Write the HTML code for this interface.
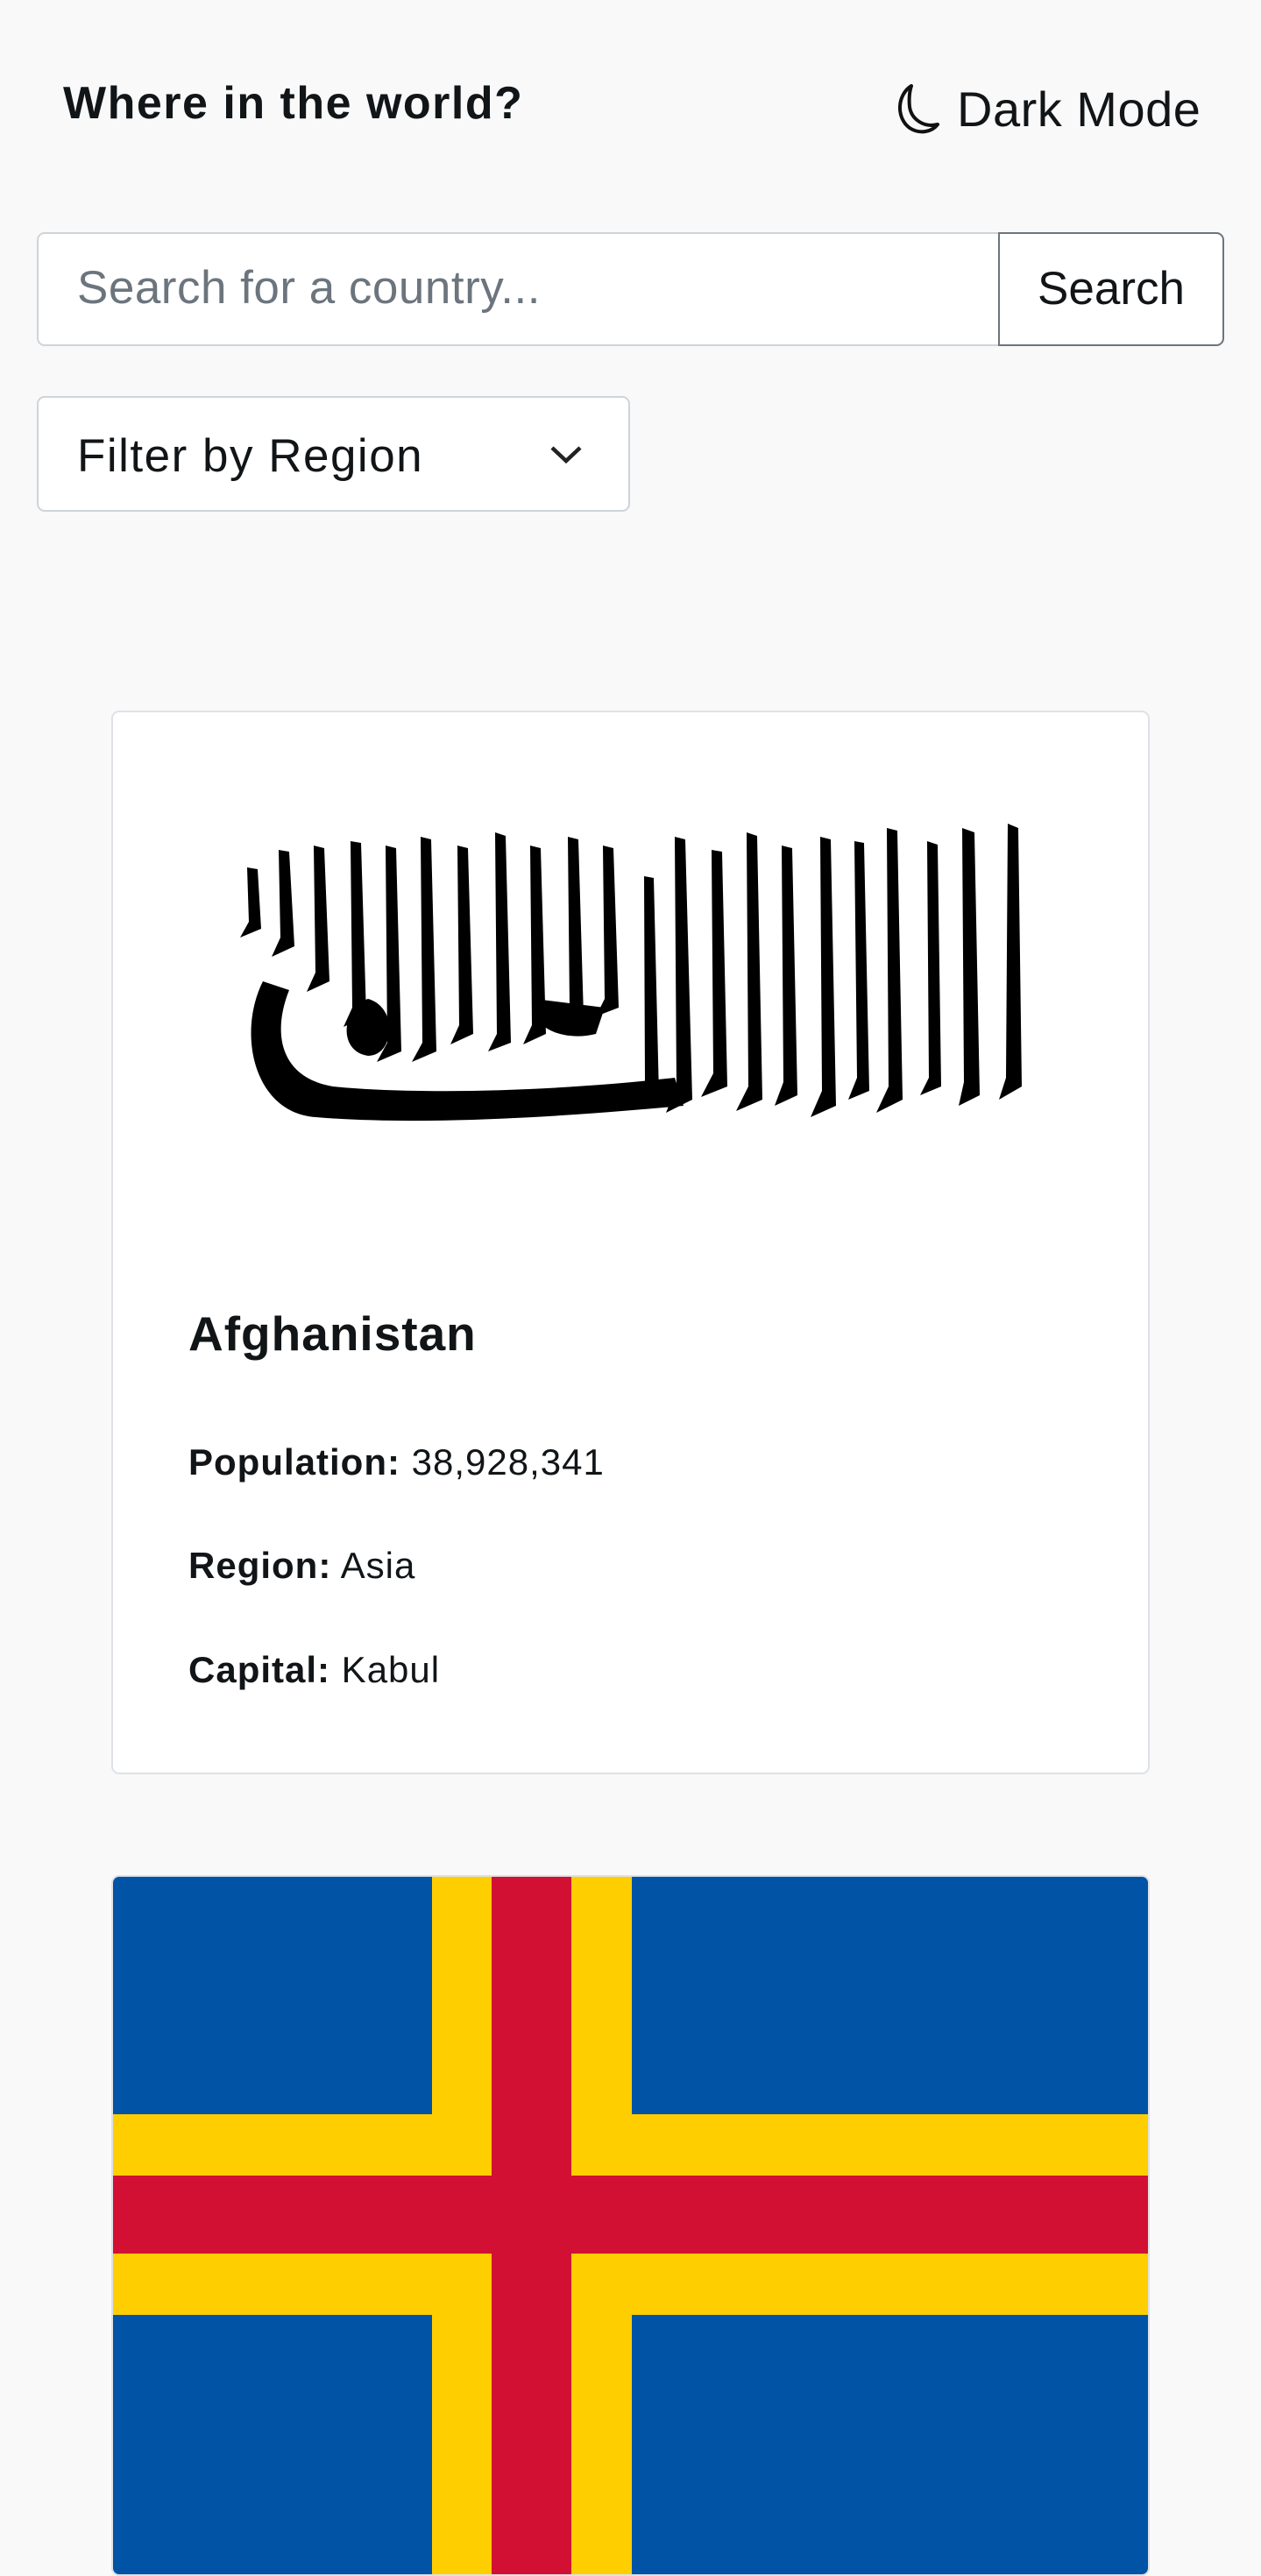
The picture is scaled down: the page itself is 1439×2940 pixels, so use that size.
<!DOCTYPE html>
<html><head><meta charset="utf-8"><style>
*{box-sizing:border-box;margin:0;padding:0}
body{width:1439px;height:2881px;overflow:hidden;background:#f9f9f9;font-family:"Liberation Sans",sans-serif;color:#111517;position:relative}
.abs{position:absolute}
.title{left:72px;top:88px;font-size:52px;font-weight:bold;letter-spacing:1.5px}
.dm{left:1092px;top:92px;font-size:56px;letter-spacing:0.5px}
.search{left:42px;top:265px;width:1355px;height:130px;background:#fff;border:2px solid #ced4da;border-radius:9px}
.ph{left:88px;top:298px;font-size:53px;color:#6c757d;letter-spacing:0.5px}
.btn{left:1139px;top:265px;width:258px;height:130px;border:2px solid #6c757d;border-radius:0 9px 9px 0;background:#fff;font-size:53px;text-align:center;line-height:126px}
.filter{left:42px;top:452px;width:677px;height:132px;background:#fff;border:2px solid #ced4da;border-radius:9px}
.ft{left:88px;top:490px;font-size:53px;letter-spacing:1.5px}
.card{left:127px;width:1185px;background:#fff;border:2px solid #dee2e6;border-radius:9px;overflow:hidden}
.name{left:215px;top:1490px;font-size:55px;font-weight:bold;letter-spacing:1px}
.row{left:215px;font-size:42px;letter-spacing:1px}
.row b{font-weight:bold}
</style></head><body>
<div class="abs title">Where in the world?</div>
<svg class="abs" style="left:1018px;top:94px" width="56" height="62" viewBox="0 0 56 62"><path d="M22 4 C6 14 4 40 20 52 C32 60 46 56 52 48 C36 52 22 42 20 28 C19 18 20 10 22 4 Z" fill="none" stroke="#111" stroke-width="4" stroke-linejoin="round"/></svg>
<div class="abs dm">Dark Mode</div>
<div class="abs search"></div>
<div class="abs ph">Search for a country...</div>
<div class="abs btn">Search</div>
<div class="abs filter"></div>
<div class="abs ft">Filter by Region</div>
<svg class="abs" style="left:626px;top:506px" width="40" height="26" viewBox="0 0 40 26"><path d="M4 5 L20 20 L36 5" fill="none" stroke="#222" stroke-width="4.5"/></svg>

<div class="abs card" style="top:811px;height:1214px"></div>
<svg class="abs" style="left:0;top:0" width="1439" height="1400" viewBox="0 0 1439 1400">
<g fill="#000">
<polygon points="1150,940 1162,945 1166,1240 1140,1255 1148,1230"/>
<polygon points="1098,945 1112,950 1118,1250 1094,1262 1100,1235"/>
<polygon points="1058,960 1070,964 1074,1240 1050,1250 1060,1230"/>
<polygon points="1012,945 1024,948 1030,1255 1000,1270 1014,1240"/>
<polygon points="975,960 986,962 992,1245 968,1255 978,1230"/>
<polygon points="936,955 948,958 954,1262 925,1275 938,1245"/>
<polygon points="892,965 904,968 910,1250 884,1262 894,1235"/>
<polygon points="852,950 864,954 870,1255 840,1268 854,1240"/>
<polygon points="812,970 824,972 830,1240 800,1252 814,1225"/>
<polygon points="770,955 782,958 790,1255 760,1270 772,1240"/>
<polygon points="735,1000 746,1002 752,1250 724,1262 736,1235"/>
<polygon points="688,965 700,968 706,1150 680,1160 690,1140"/>
<polygon points="648,955 660,958 666,1160 640,1172 650,1150"/>
<polygon points="605,965 617,968 623,1180 597,1192 607,1170"/>
<polygon points="565,950 577,954 583,1190 557,1200 567,1180"/>
<polygon points="522,965 534,968 540,1180 514,1192 524,1170"/>
<polygon points="480,955 492,958 498,1200 470,1212 482,1190"/>
<polygon points="440,965 452,968 458,1200 430,1212 442,1190"/>
<polygon points="400,960 412,962 418,1160 392,1172 402,1150"/>
<polygon points="358,965 370,968 376,1120 350,1132 360,1110"/>
<polygon points="318,970 330,972 336,1080 310,1092 320,1070"/>
<polygon points="282,990 294,992 298,1060 274,1070 284,1052"/>
<path d="M300 1120 C270 1180 290 1270 360 1275 C480 1285 640 1275 780 1262 L770 1230 C640 1245 480 1250 380 1240 C320 1230 310 1180 330 1130 Z"/>
<path d="M420 1140 C390 1150 385 1200 420 1205 C450 1205 455 1150 420 1140 Z"/>
<path d="M610 1140 C600 1170 640 1190 680 1180 L690 1150 Z"/>
</g>
</svg>
<div class="abs name">Afghanistan</div>
<div class="abs row" style="top:1645px"><b>Population:</b> 38,928,341</div>
<div class="abs row" style="top:1763px"><b>Region:</b> Asia</div>
<div class="abs row" style="top:1882px"><b>Capital:</b> Kabul</div>

<div class="abs card" style="top:2140px;height:800px;border-color:#dee2e6">
<svg width="1185" height="800" viewBox="0 0 1185 800" style="display:block">
<rect x="0" y="0" width="1185" height="800" fill="#0053a5"/>
<rect x="364" y="0" width="228" height="800" fill="#ffce00"/>
<rect x="0" y="271" width="1185" height="229" fill="#ffce00"/>
<rect x="432" y="0" width="91" height="800" fill="#d21034"/>
<rect x="0" y="341" width="1185" height="89" fill="#d21034"/>
</svg>
</div>
</body></html>
